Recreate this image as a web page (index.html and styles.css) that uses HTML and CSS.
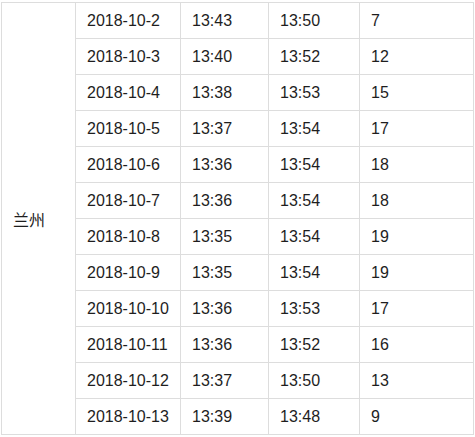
FILE: index.html
```html
<!DOCTYPE html>
<html lang="zh">
<head>
<meta charset="utf-8">
<link rel="stylesheet" href="styles.css">
</head>
<body>
<table class="times">
  <colgroup>
    <col class="c-city">
    <col class="c-date">
    <col class="c-rise">
    <col class="c-set">
    <col class="c-min">
  </colgroup>
  <tbody>
    <tr><td class="city" rowspan="12">兰州</td><td>2018-10-2</td><td>13:43</td><td>13:50</td><td>7</td></tr>
    <tr><td>2018-10-3</td><td>13:40</td><td>13:52</td><td>12</td></tr>
    <tr><td>2018-10-4</td><td>13:38</td><td>13:53</td><td>15</td></tr>
    <tr><td>2018-10-5</td><td>13:37</td><td>13:54</td><td>17</td></tr>
    <tr><td>2018-10-6</td><td>13:36</td><td>13:54</td><td>18</td></tr>
    <tr><td>2018-10-7</td><td>13:36</td><td>13:54</td><td>18</td></tr>
    <tr><td>2018-10-8</td><td>13:35</td><td>13:54</td><td>19</td></tr>
    <tr><td>2018-10-9</td><td>13:35</td><td>13:54</td><td>19</td></tr>
    <tr><td>2018-10-10</td><td>13:36</td><td>13:53</td><td>17</td></tr>
    <tr><td>2018-10-11</td><td>13:36</td><td>13:52</td><td>16</td></tr>
    <tr><td>2018-10-12</td><td>13:37</td><td>13:50</td><td>13</td></tr>
    <tr><td>2018-10-13</td><td>13:39</td><td>13:48</td><td>9</td></tr>
  </tbody>
</table>
</body>
</html>
```
FILE: styles.css
```css
html, body {
  margin: 0;
  padding: 0;
  background: #fff;
}
body {
  padding: 2px 0 0 1px;
  font-family: "Liberation Sans", Arial, "Noto Sans CJK SC", sans-serif;
  font-size: 16px;
  color: #1e1e1e;
}
.times {
  border-collapse: collapse;
  table-layout: fixed;
  width: 472px;
}
.c-city { width: 74px; }
.c-date { width: 105px; }
.c-rise { width: 88px; }
.c-set { width: 91px; }
.c-min { width: 114px; }
.times td {
  border: 1px solid #ddd;
  height: 36px;
  padding: 0 0 0 11px;
  box-sizing: border-box;
  vertical-align: middle;
  white-space: nowrap;
}
.times td.city {
  font-family: "Noto Sans CJK SC", sans-serif;
  padding-left: 11px;
}
```
